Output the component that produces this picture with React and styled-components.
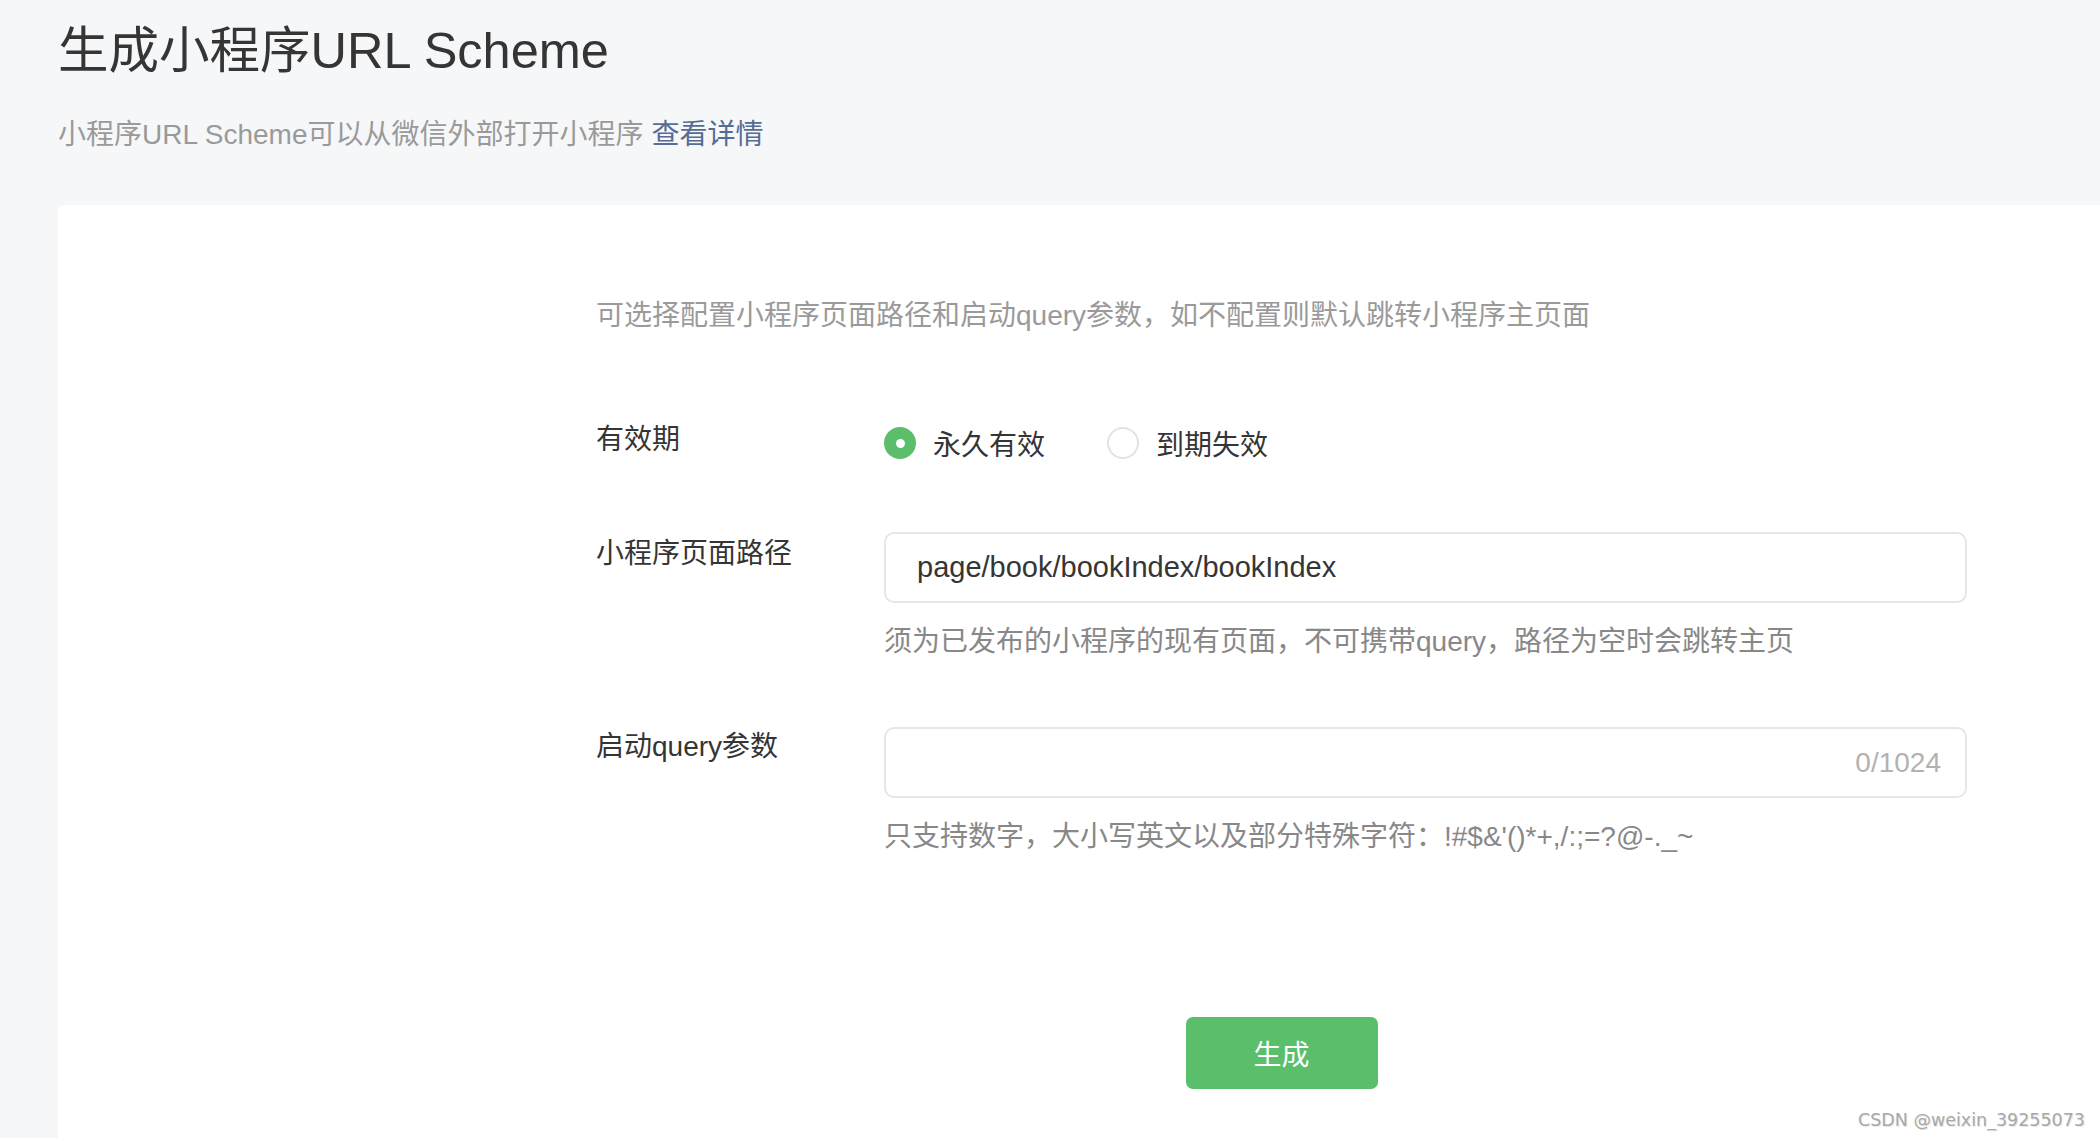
import React, { useState } from 'react';
import styled, { createGlobalStyle } from 'styled-components';

const GlobalStyle = createGlobalStyle`
  html, body {
    margin: 0;
    padding: 0;
    background: #f6f7f9;
  }
  body {
    font-family: 'Liberation Sans', 'Noto Sans CJK SC', sans-serif;
    color: #353535;
  }
  * {
    box-sizing: border-box;
  }
`;

const PageWrapper = styled.main`
  position: relative;
  min-height: 1138px;
  padding: 21px 0 0 58px;
  overflow: hidden;
`;

const Title = styled.h1`
  margin: 0;
  font-weight: 400;
  font-size: 50.5px;
  line-height: 60px;
  color: #353535;
`;

const Subtitle = styled.p`
  margin: 34px 0 0;
  font-size: 28px;
  line-height: 40px;
  color: #9a9a9a;
`;

const Link = styled.a`
  color: #576b95;
  text-decoration: none;
  margin-left: 8px;
`;

const Card = styled.section`
  margin-top: 50px;
  background: #ffffff;
  border-radius: 6px 0 0 0;
  min-height: 933px;
  padding: 91px 133px 0 538px;
`;

const Intro = styled.p`
  margin: 0 0 84px;
  font-size: 28px;
  line-height: 40px;
  color: #9a9a9a;
`;

const Fields = styled.div`
  display: flex;
  flex-direction: column;
  gap: 65px;
`;

const Row = styled.div`
  display: grid;
  grid-template-columns: 288px 1fr;
`;

const Label = styled.div`
  font-size: 28px;
  line-height: 40px;
  color: #353535;
  padding-top: ${(p) => p.$offset || 0}px;
`;

const RadioGroup = styled.div`
  display: flex;
  align-items: center;
  height: 42px;
  margin: 2px 0 3px;
  gap: 62px;
`;

const RadioOption = styled.label`
  display: flex;
  align-items: center;
  gap: 17px;
  font-size: 28px;
  color: #353535;
  cursor: pointer;
`;

const RadioCircle = styled.span`
  width: 32px;
  height: 32px;
  border-radius: 50%;
  display: flex;
  align-items: center;
  justify-content: center;
  background: ${(p) => (p.$checked ? '#5abe6b' : '#fff')};
  border: ${(p) => (p.$checked ? 'none' : '2px solid #e3e3e3')};

  &::after {
    content: '';
    width: 9px;
    height: 9px;
    border-radius: 50%;
    background: #fff;
    display: ${(p) => (p.$checked ? 'block' : 'none')};
  }
`;

const InputBox = styled.div`
  display: flex;
  align-items: center;
  height: 71px;
  border: 2px solid #e6e6e6;
  border-radius: 10px;
  padding: 0 24px 0 31px;
`;

const TextInput = styled.input`
  flex: 1;
  border: none;
  outline: none;
  background: transparent;
  font-family: 'Liberation Sans', 'Noto Sans CJK SC', sans-serif;
  font-size: 29px;
  color: #353535;
  padding: 0;
`;

const Counter = styled.span`
  font-size: 28px;
  color: #b2b2b2;
`;

const Hint = styled.p`
  margin: 19px 0 0;
  font-size: 28px;
  line-height: 40px;
  color: #888888;
`;

const Actions = styled.div`
  display: flex;
  justify-content: center;
  margin-top: 160px;
`;

const SubmitButton = styled.button`
  width: 192px;
  height: 72px;
  border: none;
  border-radius: 7px;
  background: #5abe6b;
  color: #fff;
  font-family: 'Liberation Sans', 'Noto Sans CJK SC', sans-serif;
  font-size: 28px;
  cursor: pointer;
`;

const Watermark = styled.div`
  position: absolute;
  right: 15px;
  bottom: 8px;
  font-family: 'DejaVu Sans', 'Noto Sans CJK SC', sans-serif;
  font-size: 17.5px;
  color: #a8a8a8;
  text-shadow: 1px 1px 0 #e8e8e8;
`;

export default function App() {
  const [forever, setForever] = useState(true);
  const [path, setPath] = useState('page/book/bookIndex/bookIndex');
  const [query, setQuery] = useState('');

  return (
    <PageWrapper>
      <GlobalStyle />
      <Title>生成小程序URL Scheme</Title>
      <Subtitle>
        小程序URL Scheme可以从微信外部打开小程序<Link href="#">查看详情</Link>
      </Subtitle>
      <Card>
        <Intro>可选择配置小程序页面路径和启动query参数，如不配置则默认跳转小程序主页面</Intro>
        <Fields>
          <Row>
            <Label>有效期</Label>
            <RadioGroup>
              <RadioOption onClick={() => setForever(true)}>
                <RadioCircle $checked={forever} />
                永久有效
              </RadioOption>
              <RadioOption onClick={() => setForever(false)}>
                <RadioCircle $checked={!forever} />
                到期失效
              </RadioOption>
            </RadioGroup>
          </Row>
          <Row>
            <Label $offset={2}>小程序页面路径</Label>
            <div>
              <InputBox>
                <TextInput value={path} onChange={(e) => setPath(e.target.value)} />
              </InputBox>
              <Hint>须为已发布的小程序的现有页面，不可携带query，路径为空时会跳转主页</Hint>
            </div>
          </Row>
          <Row>
            <Label>启动query参数</Label>
            <div>
              <InputBox>
                <TextInput value={query} maxLength={1024} onChange={(e) => setQuery(e.target.value)} />
                <Counter>{query.length}/1024</Counter>
              </InputBox>
              <Hint>只支持数字，大小写英文以及部分特殊字符：!#$&amp;'()*+,/:;=?@-._~</Hint>
            </div>
          </Row>
        </Fields>
        <Actions>
          <SubmitButton>生成</SubmitButton>
        </Actions>
      </Card>
      <Watermark>CSDN @weixin_39255073</Watermark>
    </PageWrapper>
  );
}
